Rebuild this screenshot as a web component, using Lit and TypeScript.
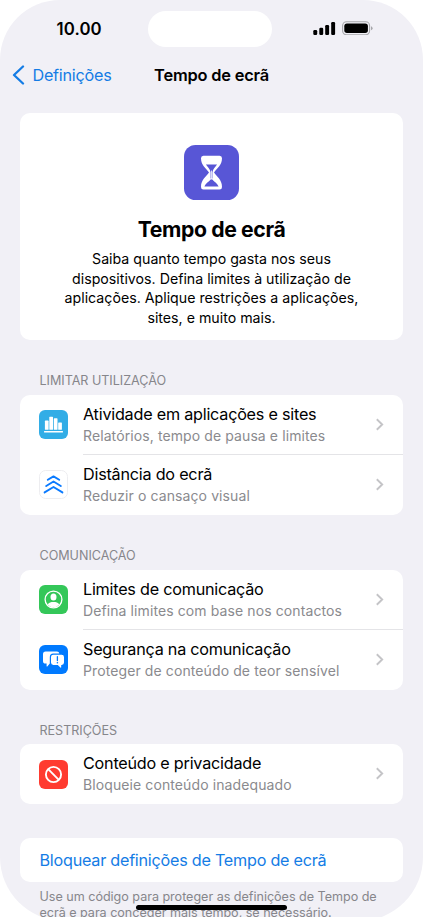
import { LitElement, html, css, svg, TemplateResult } from "lit";
import { customElement, property } from "lit/decorators.js";

type IconName = "chart" | "distance" | "contact" | "bubbles" | "block";

const glyphs: Record<IconName, TemplateResult> = {
  chart: svg`
    <rect width="29" height="29" rx="6" fill="#32ade6"/>
    <g fill="#fff">
      <rect x="5.9" y="10.6" width="3.7" height="9.2" rx=".6"/>
      <rect x="10.3" y="6.8" width="3.7" height="13" rx=".6"/>
      <rect x="14.8" y="8.3" width="3.7" height="11.5" rx=".6"/>
      <rect x="19.2" y="12.5" width="3.7" height="7.3" rx=".6"/>
      <rect x="5" y="20.9" width="19" height="1.6" rx=".5"/>
    </g>`,
  distance: svg`
    <rect x=".5" y=".5" width="28" height="28" rx="6.2" fill="#fff" stroke="#ededf0"/>
    <g fill="none" stroke="#0a7aff" stroke-width="1.9" stroke-linecap="round" stroke-linejoin="round">
      <path d="M8.8 9.8 L14.5 6.4 L20.2 9.8"/>
      <path d="M7.2 16 L14.5 11.5 L21.8 16"/>
      <path d="M5.6 22.4 L14.5 17 L23.4 22.4"/>
    </g>`,
  contact: svg`
    <rect width="29" height="29" rx="6" fill="#34c759"/>
    <circle cx="14.5" cy="14.5" r="8.4" fill="none" stroke="#fff" stroke-width="1.3"/>
    <ellipse cx="14.5" cy="12" rx="3" ry="3.6" fill="#fff"/>
    <path fill="#fff" d="M8.7 19.4 C9.8 17.5 12 17 14.5 17 S19.2 17.5 20.3 19.4 A7.4 7.4 0 0 1 8.7 19.4Z"/>`,
  bubbles: svg`
    <rect width="29" height="29" rx="6" fill="#007aff"/>
    <path fill="#fff" d="M6.6 6.6 H18 A2.6 2.6 0 0 1 20.4 8.6 H14.2 A3.6 3.6 0 0 0 10.8 12.2 V18.5 L8.3 21.4 Q7.6 21.9 7.6 21 V18.6 H6.6 A2.6 2.6 0 0 1 4 16 V9.2 A2.6 2.6 0 0 1 6.6 6.6Z"/>
    <path fill="#fff" d="M14.4 9.7 H22.6 A2.4 2.4 0 0 1 25 12.1 V17.6 A2.4 2.4 0 0 1 22.6 20 H22.2 V22.3 Q22.1 23.1 21.4 22.5 L18.8 20 H14.4 A2.4 2.4 0 0 1 12 17.6 V12.1 A2.4 2.4 0 0 1 14.4 9.7Z"/>
    <path d="M18.4 11.7 V15.5" stroke="#007aff" stroke-width="1.3" stroke-linecap="round"/>
    <circle cx="18.4" cy="17.7" r=".8" fill="#007aff"/>`,
  block: svg`
    <rect width="29" height="29" rx="6" fill="#ff3b30"/>
    <g fill="none" stroke="#fff" stroke-width="1.9">
      <circle cx="14.5" cy="14.5" r="7.6"/>
      <path d="M9.2 9.2 L19.8 19.8"/>
    </g>`,
};

@customElement("settings-row")
class SettingsRow extends LitElement {
  @property() icon: IconName = "chart";
  @property() label = "";
  @property() detail = "";

  static styles = css`
    :host { display: flex; align-items: center; height: 60px; padding-left: 19px; }
    .icon { width: 29px; height: 29px; flex: none; margin-right: 15px; }
    .body {
      flex: 1; align-self: stretch; display: flex; align-items: center; box-sizing: border-box;
      justify-content: space-between; padding-right: 19px;
      border-bottom: 1px solid var(--divider, transparent);
    }
    .text { display: flex; flex-direction: column; white-space: nowrap; }
    .label { font-size: 16.2px; line-height: 22px; letter-spacing: -0.23px; color: #000; }
    .detail { font-size: 14px; line-height: 21px; letter-spacing: 0.1px; color: #8a8a8e; }
    .chevron { width: 8px; height: 13px; }
  `;

  render() {
    return html`
      <svg class="icon" viewBox="0 0 29 29">${glyphs[this.icon]}</svg>
      <div class="body">
        <div class="text">
          <span class="label">${this.label}</span>
          <span class="detail">${this.detail}</span>
        </div>
        <svg class="chevron" viewBox="0 0 8 13">
          <path d="M0.8 1.2 L6.2 6.5 L0.8 11.8" fill="none" stroke="#c4c4c7" stroke-width="1.9"/>
        </svg>
      </div>`;
  }
}

const sections: { title: string; rows: { icon: IconName; label: string; detail: string }[] }[] = [
  {
    title: "LIMITAR UTILIZAÇÃO",
    rows: [
      { icon: "chart", label: "Atividade em aplicações e sites", detail: "Relatórios, tempo de pausa e limites" },
      { icon: "distance", label: "Distância do ecrã", detail: "Reduzir o cansaço visual" },
    ],
  },
  {
    title: "COMUNICAÇÃO",
    rows: [
      { icon: "contact", label: "Limites de comunicação", detail: "Defina limites com base nos contactos" },
      { icon: "bubbles", label: "Segurança na comunicação", detail: "Proteger de conteúdo de teor sensível" },
    ],
  },
  {
    title: "RESTRIÇÕES",
    rows: [{ icon: "block", label: "Conteúdo e privacidade", detail: "Bloqueie conteúdo inadequado" }],
  },
];

@customElement("app-root")
class AppRoot extends LitElement {
  static styles = css`
    :host {
      display: block; position: relative; width: 423px; height: 917px; overflow: hidden;
      background: #fff; font-family: Inter, "Liberation Sans", sans-serif; color: #000;
    }
    .screen {
      box-sizing: border-box; height: 921px; background: #f1f0f6;
      border-radius: 60px 60px 64px 64px; overflow: hidden;
    }
    .status {
      display: grid; grid-template-columns: 148px 124px 1fr; height: 36px; padding-top: 11px;
    }
    .time {
      font-size: 16.8px; font-weight: 600; line-height: 36px; padding-left: 56.5px; letter-spacing: 0.1px;
    }
    .island { border-radius: 18px; background: #fff; }
    .indicators { width: 60px; height: 14px; margin: 10px 0 0 41px; }
    .nav {
      display: grid; grid-template-columns: 141px 141px 141px; align-items: center;
      height: 39px; padding-top: 8px;
    }
    .back { display: flex; align-items: center; padding-left: 12px; gap: 7.5px; color: #147ce5; white-space: nowrap; }
    .back-arrow { width: 13px; height: 20px; flex: none; }
    .back-label { font-size: 16.2px; letter-spacing: -0.25px; }
    .nav-title { text-align: center; font-size: 16.4px; font-weight: 600; letter-spacing: -0.2px; white-space: nowrap; }
    .content { padding: 19px 20px 0; }
    .card { background: #fff; border-radius: 10px; overflow: hidden; }
    .hero {
      height: 227px; box-sizing: border-box; padding-top: 32px;
      display: flex; flex-direction: column; align-items: center;
    }
    .hero-icon { width: 55px; height: 55px; }
    .hero-title { margin: 16px 0 0; font-size: 21.2px; line-height: 27px; font-weight: 700; letter-spacing: -0.37px; }
    .hero-text { margin: 6px 0 0; font-size: 14.2px; line-height: 19.7px; text-align: center; white-space: nowrap; }
    .section-title {
      margin: 0; padding: 33.1px 0 5.5px 19.5px; font-size: 12.6px; line-height: 16px;
      font-weight: 400; letter-spacing: -0.03px; color: #86868b;
    }
    .hero + .section-title { padding-bottom: 5.9px; }
    .divided { --divider: #e4e4e7; }
    .lock { margin-top: 34px; height: 43.4px; padding-left: 19.5px; line-height: 44px; font-size: 16.2px; letter-spacing: -0.25px; color: #147ce5; }
    .note { margin: 7.3px 0 0; padding-left: 19.5px; font-size: 12.6px; line-height: 16px; letter-spacing: -0.03px; color: #86868b; white-space: nowrap; }
    .home { position: absolute; left: 136px; top: 904.5px; width: 151px; height: 5px; border-radius: 3px; background: #000; }
  `;

  render() {
    return html`
      <div class="screen">
        <div class="status">
          <div class="time">10.00</div>
          <div class="island"></div>
          <svg class="indicators" viewBox="0 0 60 14">
            <rect x="0.3" y="9" width="3.9" height="5" rx="1.2"/>
            <rect x="6.3" y="6.8" width="3.9" height="7.2" rx="1.2"/>
            <rect x="12.2" y="4" width="3.9" height="10" rx="1.2"/>
            <rect x="18.2" y="1" width="3.9" height="13" rx="1.2"/>
            <rect x="29.6" y="0.8" width="27" height="12.9" rx="4" fill="none" stroke="#a6a6aa" stroke-width="1.1"/>
            <rect x="31.3" y="2.5" width="23.6" height="9.5" rx="2.7"/>
            <path d="M58 5.3 Q59.6 5.8 59.6 7.3 T58 9.3Z" fill="#a6a6aa"/>
          </svg>
        </div>
        <div class="nav">
          <div class="back">
            <svg class="back-arrow" viewBox="0 0 13 20">
              <path d="M11 1.5 L2 10 L11 18.5" fill="none" stroke="#147ce5" stroke-width="2.3" stroke-linecap="round" stroke-linejoin="round"/>
            </svg>
            <span class="back-label">Definições</span>
          </div>
          <div class="nav-title">Tempo de ecrã</div>
        </div>
        <div class="content">
          <div class="card hero">
            <svg class="hero-icon" viewBox="0 0 55 55">
              <rect width="55" height="55" rx="11.5" fill="#5856d6"/>
              <path fill="#fff" d="M19.4 10.8 H35.6 Q38 10.8 38 13.3 C38 20.5 32.8 23.2 30 27.6 C32.8 32 38 34.7 38 42 Q38 44.5 35.6 44.5 H19.4 Q17 44.5 17 42 C17 34.7 22.2 32 25 27.6 C22.2 23.2 17 20.5 17 13.3 Q17 10.8 19.4 10.8Z"/>
              <path fill="#5856d6" d="M21.9 19.6 H33.1 C31.5 22 28.9 24.2 28.4 27.2 V33.5 H26.6 V27.2 C26.1 24.2 23.5 22 21.9 19.6Z"/>
              <path fill="#5856d6" d="M27.5 33.4 C29.4 36.2 33.4 38 34.6 41.6 H20.4 C21.6 38 25.6 36.2 27.5 33.4Z"/>
              <path d="M27.5 25.5 V34.5" stroke="#fff" stroke-width=".8"/>
            </svg>
            <h1 class="hero-title">Tempo de ecrã</h1>
            <p class="hero-text">Saiba quanto tempo gasta nos seus<br>dispositivos. Defina limites à utilização de<br>aplicações. Aplique restrições a aplicações,<br>sites, e muito mais.</p>
          </div>
          ${sections.map(
            (s) => html`
              <h2 class="section-title">${s.title}</h2>
              <div class="card">
                ${s.rows.map(
                  (r, i) => html`<settings-row
                    class=${i < s.rows.length - 1 ? "divided" : ""}
                    .icon=${r.icon} .label=${r.label} .detail=${r.detail}
                  ></settings-row>`
                )}
              </div>`
          )}
          <div class="card lock">Bloquear definições de Tempo de ecrã</div>
          <p class="note">Use um código para proteger as definições de Tempo de<br>ecrã e para conceder mais tempo, se necessário.</p>
        </div>
      </div>
      <div class="home"></div>`;
  }
}
